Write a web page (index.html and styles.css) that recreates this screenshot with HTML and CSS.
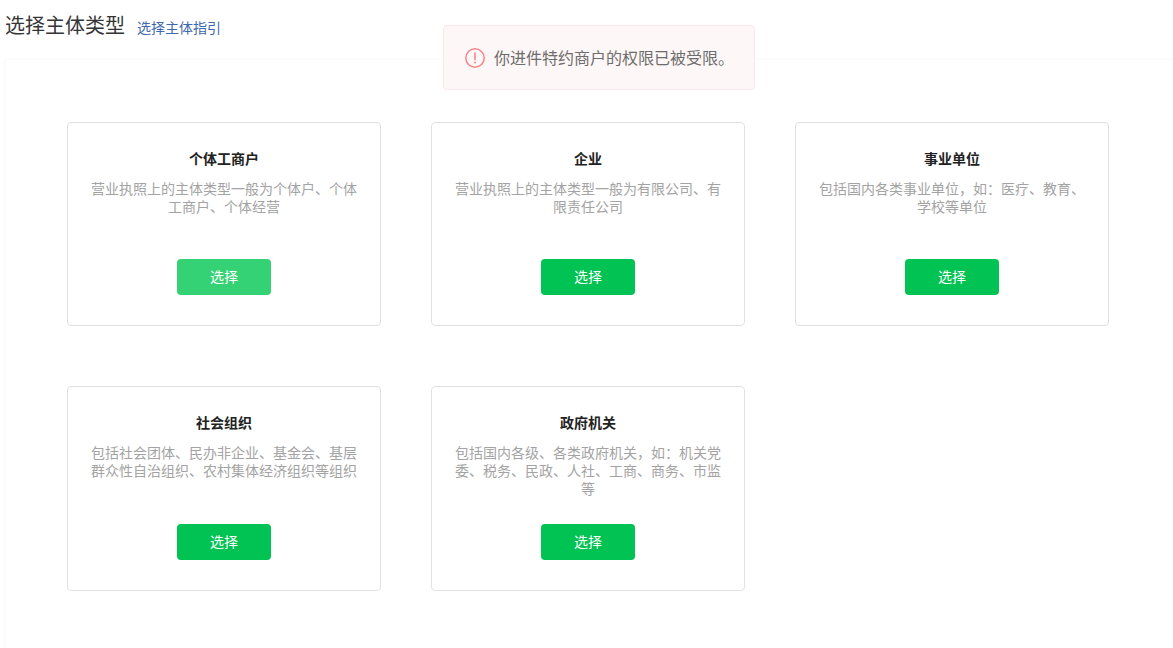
FILE: index.html
```html
<!DOCTYPE html>
<html lang="zh-CN">
<head>
<meta charset="utf-8">
<title>选择主体类型</title>
<link rel="stylesheet" href="styles.css">
</head>
<body>
<div class="toast">
  <svg class="toast-icon" width="20" height="20" viewBox="0 0 20 20" fill="none">
    <circle cx="10" cy="10" r="9.2" stroke="#fa8388" stroke-width="1.5"/>
    <path d="M10 5v6.4" stroke="#fa8388" stroke-width="1.6" stroke-linecap="round"/>
    <circle cx="10" cy="14.4" r="1" fill="#fa8388"/>
  </svg>
  <span class="toast-text">你进件特约商户的权限已被受限。</span>
</div>
<header class="head">
  <h1 class="head-title">选择主体类型</h1>
  <a class="head-link" href="#">选择主体指引</a>
</header>
<main class="panel">
  <section class="card">
    <h2 class="card-title">个体工商户</h2>
    <p class="card-desc">营业执照上的主体类型一般为个体户、个体工商户、个体经营</p>
    <button class="btn btn-hover">选择</button>
  </section>
  <section class="card">
    <h2 class="card-title">企业</h2>
    <p class="card-desc">营业执照上的主体类型一般为有限公司、有限责任公司</p>
    <button class="btn">选择</button>
  </section>
  <section class="card">
    <h2 class="card-title">事业单位</h2>
    <p class="card-desc">包括国内各类事业单位，如：医疗、教育、学校等单位</p>
    <button class="btn">选择</button>
  </section>
  <section class="card">
    <h2 class="card-title">社会组织</h2>
    <p class="card-desc">包括社会团体、民办非企业、基金会、基层群众性自治组织、农村集体经济组织等组织</p>
    <button class="btn">选择</button>
  </section>
  <section class="card">
    <h2 class="card-title">政府机关</h2>
    <p class="card-desc">包括国内各级、各类政府机关，如：机关党委、税务、民政、人社、工商、商务、市监等</p>
    <button class="btn">选择</button>
  </section>
</main>
</body>
</html>
```

FILE: styles.css
```css
* { box-sizing: border-box; }

html, body { height: 100%; }

body {
  display: flex;
  flex-direction: column;
  margin: 0;
  background: #fff;
  color: #353535;
  font-family: "Liberation Sans", "Noto Sans CJK SC", sans-serif;
  overflow: hidden;
}

.head {
  display: flex;
  flex: none;
  align-items: baseline;
  gap: 12px;
  height: 59px;
  padding: 12px 0 0 5px;
}

.head-title {
  margin: 0;
  font-size: 20px;
  line-height: 28px;
  font-weight: 400;
}

.head-link {
  font-size: 14px;
  color: #3f68ad;
  text-decoration: none;
}

.panel {
  display: grid;
  flex: 1;
  min-height: 0;
  grid-template-columns: repeat(3, 314px);
  column-gap: 50px;
  row-gap: 60px;
  align-content: start;
  margin-left: 4px;
  padding: 62px 0 0 62px;
  border-style: solid;
  border-color: #f9f9f9;
  border-width: 1px 0 0 1px;
  border-top-left-radius: 4px;
}

.card {
  display: flex;
  flex-direction: column;
  align-items: center;
  padding: 27px 23px 30px;
  border: 1px solid #e2e2e2;
  border-radius: 4px;
  text-align: center;
}

.card-title {
  margin: 0;
  font-size: 14px;
  line-height: 18px;
  font-weight: 700;
  color: #222;
}

.card-desc {
  margin: 12px 0 25px;
  min-height: 54px;
  font-size: 14px;
  line-height: 18.2px;
  color: #a3a3a3;
}

.btn {
  flex: none;
  width: 94px;
  height: 36px;
  margin-top: auto;
  padding: 0 0 2px;
  border: 0;
  border-radius: 4px;
  background: #00c353;
  color: #fff;
  font: inherit;
  font-size: 14px;
}

.btn-hover { background: #35d275; }

.toast {
  position: absolute;
  z-index: 1;
  top: 25px;
  left: 443px;
  display: flex;
  align-items: center;
  gap: 9px;
  width: 312px;
  height: 65px;
  padding-left: 21px;
  background: #fef7f7;
  border: 1px solid #fde8e9;
  border-radius: 4px;
  color: #6d6d6d;
  font-size: 16px;
}

.toast-icon { flex: none; }

.toast-text { padding-bottom: 2px; }
```
